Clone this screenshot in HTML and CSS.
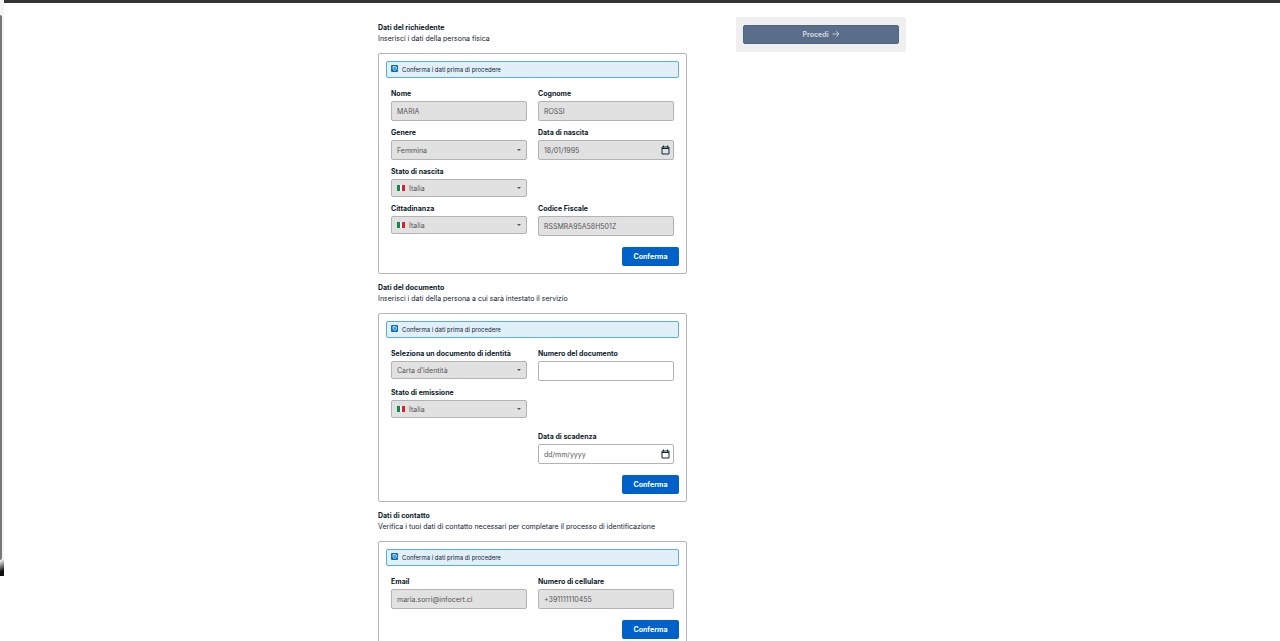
FILE: index.html
```
<!DOCTYPE html>
<html lang="it">
<head>
<meta charset="utf-8">
<title>Dati del richiedente</title>
<link rel="stylesheet" href="styles.css">
</head>
<body>
<svg class="defs" aria-hidden="true">
  <symbol id="info" viewBox="0 0 14 14"><rect width="14" height="14" rx="2" fill="#0b6fb8"/><path d="M4 3h4a3 3 0 0 1 3 3v1a3.500 3.500 0 0 1-7 0zM5 6h4" fill="none" stroke="#d9effb" stroke-width="1.600"/></symbol>
  <symbol id="flag" viewBox="0 0 8 6"><path fill="#fff" d="M0 0h8v6H0z"/><path fill="#108a4a" d="M0 0h3v6H0z"/><path fill="#d5202f" d="M5 0h3v6H5z"/></symbol>
  <symbol id="calendar" viewBox="0 0 18 20"><path d="M2 4h14v14H2zM2 7h14M5 1v4M13 1v4" fill="none" stroke="#14263a" stroke-width="2"/></symbol>
  <symbol id="arrow" viewBox="0 0 16 16"><path d="M1 8h13M8.500 2.500 14 8l-5.500 5.500" fill="none" stroke="currentColor" stroke-width="1.800"/></symbol>
</svg>
<div class="shell">
  <div class="rail"><div class="rail-thumb"></div></div>
  <div class="page">
    <div class="topbar"></div>
    <div class="layout">
      <main>
        <section>
          <h2>Dati del richiedente</h2>
          <p class="lead">Inserisci i dati della persona fisica</p>
          <form class="card">
            <div class="alert"><svg><use href="#info"/></svg>Conferma i dati prima di procedere</div>
            <div class="fields">
              <div class="field"><label for="nome">Nome</label><div class="control"><input id="nome" value="MARIA" disabled></div></div>
              <div class="field"><label for="cognome">Cognome</label><div class="control"><input id="cognome" value="ROSSI" disabled></div></div>
              <div class="field"><label for="genere">Genere</label><div class="control select"><select id="genere" disabled><option>Femmina</option></select></div></div>
              <div class="field"><label for="nascita">Data di nascita</label><div class="control date"><input id="nascita" value="18/01/1995" disabled><button type="button" aria-label="Apri calendario" disabled><svg><use href="#calendar"/></svg></button></div></div>
              <div class="field first"><label for="stato">Stato di nascita</label><div class="control select country"><svg><use href="#flag"/></svg><select id="stato" disabled><option>Italia</option></select></div></div>
              <div class="field first"><label for="cittadinanza">Cittadinanza</label><div class="control select country"><svg><use href="#flag"/></svg><select id="cittadinanza" disabled><option>Italia</option></select></div></div>
              <div class="field"><label for="cf">Codice Fiscale</label><div class="control"><input id="cf" value="RSSMRA95A58H501Z" disabled></div></div>
            </div>
            <button type="button" class="confirm">Conferma</button>
          </form>
        </section>
        <section>
          <h2>Dati del documento</h2>
          <p class="lead">Inserisci i dati della persona a cui sarà intestato il servizio</p>
          <form class="card">
            <div class="alert"><svg><use href="#info"/></svg>Conferma i dati prima di procedere</div>
            <div class="fields">
              <div class="field"><label for="documento">Seleziona un documento di identità</label><div class="control select short"><select id="documento" disabled><option>Carta d’identità</option></select></div></div>
              <div class="field"><label for="numero">Numero del documento</label><div class="control open"><input id="numero"></div></div>
              <div class="field whole"><label for="emissione">Stato di emissione</label><div class="control select country"><svg><use href="#flag"/></svg><select id="emissione" disabled><option>Italia</option></select></div></div>
              <div class="field second"><label for="scadenza">Data di scadenza</label><div class="control date open"><input id="scadenza" placeholder="dd/mm/yyyy"><button type="button" aria-label="Apri calendario"><svg><use href="#calendar"/></svg></button></div></div>
            </div>
            <button type="button" class="confirm">Conferma</button>
          </form>
        </section>
        <section>
          <h2>Dati di contatto</h2>
          <p class="lead">Verifica i tuoi dati di contatto necessari per completare il processo di identificazione</p>
          <form class="card">
            <div class="alert"><svg><use href="#info"/></svg>Conferma i dati prima di procedere</div>
            <div class="fields">
              <div class="field"><label for="email">Email</label><div class="control"><input id="email" value="maria.sorri@infocert.ci" disabled></div></div>
              <div class="field"><label for="cellulare">Numero di cellulare</label><div class="control"><input id="cellulare" value="+391111110455" disabled></div></div>
            </div>
            <button type="button" class="confirm">Conferma</button>
          </form>
        </section>
      </main>
      <aside><button type="button" class="proceed" disabled>Procedi <svg><use href="#arrow"/></svg></button></aside>
    </div>
  </div>
</div>
</body>
</html>
```
FILE: styles.css
```
* { box-sizing: border-box; }
html { scrollbar-width: none; }
body { margin: 0; background: #fff; color: #0f2135; font: 7px/11px Inter, "Liberation Sans", sans-serif; }
.defs { display: none; }
svg { display: block; flex: none; }
h2, p { margin: 0; font-size: 7px; line-height: 11px; }
input, select, button { font: inherit; color: inherit; margin: 0; }

.shell { display: flex; align-items: flex-start; }
.rail { width: 4px; height: 576px; padding-top: 15px; background: linear-gradient(155deg, #f4f4f4 97%, #111 99%); }
.rail-thumb { width: 2px; height: 545px; background: #777; border-radius: 0 2px 2px 0; }
.page { flex: 1; min-width: 0; }
.topbar { height: 3px; background: #363435; }
.layout { display: grid; grid-template-columns: minmax(0, 309fr) minmax(0, 170fr); column-gap: 49px; align-items: start; max-width: 528px; margin: 0 auto; padding-top: 14px; }
main { display: grid; gap: 8px; padding-top: 5px; }
h2 { font-weight: 700; color: #0c1a2b; }

.card { display: flex; flex-direction: column; margin-top: 9px; padding: 7px; border: 1px solid #b5b5b5; border-radius: 2px; }
.alert { display: flex; align-items: center; gap: 4px; height: 17px; padding: 0 4px; background: #e1f0f8; border: 1px solid #5aaede; border-radius: 2px; font-size: 6px; }
.alert svg { width: 7px; height: 7px; margin-bottom: 2px; }

.fields { display: grid; grid-template-columns: 1fr 1fr; gap: 7px 11px; margin: 11px 5px; }
.field { display: flex; flex-direction: column; gap: 2px; min-width: 0; }
.field.first { grid-column: 1; }
.field.second { grid-column: 2; grid-row: 3; margin-top: 7px; }
.field label { font-weight: 700; line-height: 10px; color: #0c1a2b; white-space: nowrap; }
.control { display: flex; align-items: center; height: 20px; padding: 0 5px; background: #e1e1e1; border: 1px solid #b3b3b3; border-radius: 2px; color: #555; }
.control.open { background: #fff; }
.control.country, .control.short { height: 18px; }
.control input, .control select { flex: 1; min-width: 0; padding: 0; border: 0; background: none; color: inherit; opacity: 1; appearance: none; outline: 0; }
.control input::placeholder { color: #555; }
.select::after { content: ""; border: 2px solid transparent; border-top-color: #555; border-bottom: 0; }
.country { gap: 4px; }
.country svg { width: 8px; height: 6px; }
.date button { padding: 0; border: 0; background: none; }
.date { padding-right: 3px; }
.date svg { width: 9px; height: 10px; }

.confirm { align-self: flex-end; width: 57px; height: 19px; padding: 0 0 1px; border: 0; border-radius: 2px; background: #0062c8; color: #fff; font-weight: 700; }
aside { padding: 8px 7px; background: #efefef; border-radius: 2px; }
.proceed { display: flex; align-items: center; justify-content: center; gap: 3px; width: 100%; height: 19px; padding: 0 0 1px; border: 1px solid #4a6684; border-radius: 2px; background: #5a6d89; color: #ccd6e0; font-weight: 700; }
.proceed svg { width: 8px; height: 8px; }
```
